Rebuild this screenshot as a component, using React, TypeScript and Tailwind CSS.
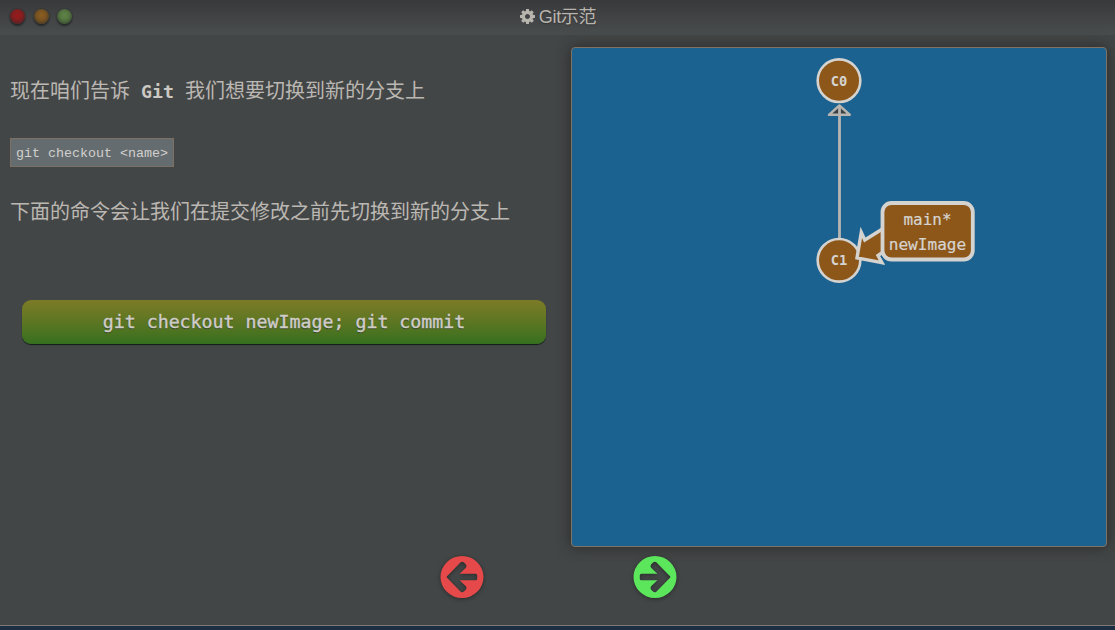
import React from "react";

function GearIcon() {
  return (
    <svg viewBox="0 128 1536 1536" className="h-[15px] w-[15px] fill-[#b8b4ae]">
      <path d="M1024 896q0-106-75-181t-181-75-181 75-75 181 75 181 181 75 181-75 75-181zm512-109v222q0 12-8 23t-20 13l-185 28q-19 54-39 91 35 50 107 138 10 12 10 25t-9 23q-27 37-99 108t-94 71q-12 0-26-9l-138-108q-44 23-91 38-16 136-29 186-7 28-36 28h-222q-14 0-24.5-8.5t-11.5-21.5l-28-184q-49-16-90-37l-141 107q-10 9-25 9-14 0-25-11-126-114-165-168-7-10-7-23 0-12 8-23 15-21 51-66.5t54-70.5q-27-50-41-99l-183-27q-13-2-21-12.5t-8-23.5v-222q0-12 8-23t19-13l186-28q14-46 39-92-40-57-107-138-10-12-10-24 0-10 9-23 26-36 98.5-107.5t94.5-71.5q13 0 26 10l138 107q44-23 91-38 16-136 29-186 7-28 36-28h222q14 0 24.5 8.5t11.5 21.5l28 184q49 16 90 37l142-107q9-9 24-9 13 0 25 10 129 119 165 170 7 8 7 22 0 12-8 23-15 21-51 66.5t-54 70.5q26 50 41 98l183 28q13 2 21 12.5t8 23.5z" />
    </svg>
  );
}

function WindowDots() {
  const base = "h-[15px] w-[15px] rounded-full shadow-[0_2px_2px_#25282a,0_0_2px_#2b2c2e]";
  return (
    <div className="flex flex-1 gap-[8.5px] pb-[2px] pl-[10px]">
      <span className={base + " bg-[radial-gradient(circle_at_50%_42%,#981b1c_0%,#8a1d1e_35%,#6b2022_60%,#352a2c_100%)]"} />
      <span className={base + " bg-[radial-gradient(circle_at_50%_42%,#8b5d20_0%,#7e5621_35%,#634822_60%,#33302c_100%)]"} />
      <span className={base + " bg-[radial-gradient(circle_at_50%_42%,#5e8446_0%,#577842_35%,#476038_60%,#2e3630_100%)]"} />
    </div>
  );
}

function CommitGraph() {
  return (
    <svg viewBox="572 48 534 498" className="block h-[498px] w-[534px] font-['DejaVu_Sans_Mono',monospace]">
      <path d="M839.4 105.5 L849.9 114.8 H828.9 Z" fill="#3b4245" stroke="#b8b5b1" strokeWidth="2.4" strokeLinejoin="round" />
      <path d="M839.5 107 V240" stroke="#b8b5b1" strokeWidth="2.8" />
      <g fill="#8d5719" stroke="#d5d3d0" strokeWidth="2.6">
        <circle cx="839" cy="80.7" r="21.3" />
        <circle cx="839" cy="260.3" r="21.3" />
      </g>
      <g fill="#d5d3d0" fontSize="13.5" fontWeight="bold" textAnchor="middle">
        <text x="839" y="86" textLength="16.6" lengthAdjust="spacingAndGlyphs">C0</text>
        <text x="839" y="265" textLength="16.6" lengthAdjust="spacingAndGlyphs">C1</text>
      </g>
      <path
        d="M884 228 L864.8 240 L861.3 232.5 L857 257.8 L882 262.7 L878 255.5 L886 250"
        fill="#8d5719"
        stroke="#d5d3d0"
        strokeWidth="3.4"
      />
      <rect x="882.5" y="203" width="90.3" height="56.5" rx="9" fill="#8d5719" stroke="#d5d3d0" strokeWidth="3.8" />
      <g fill="#d5d3d0" stroke="#d5d3d0" strokeWidth="0.2" fontSize="15" textAnchor="middle">
        <text x="927.5" y="225" textLength="48" lengthAdjust="spacingAndGlyphs">main*</text>
        <text x="927.5" y="250" textLength="77.5" lengthAdjust="spacingAndGlyphs">newImage</text>
      </g>
    </svg>
  );
}

function ArrowButton({ label, color, next }: { label: string; color: string; next?: boolean }) {
  return (
    <button aria-label={label} className="h-11 w-11">
      <svg
        viewBox="0 0 44 44"
        className={"h-11 w-11 overflow-visible drop-shadow-[0_1px_2px_#292b2b] " + color + (next ? " -scale-x-100" : "")}
      >
        <path
          fillRule="evenodd"
          fill="currentColor"
          d="M22 1 A21.5 21 0 1 1 22 43 A21.5 21 0 1 1 22 1 Z M7 21.2 L20.7 7.3 Q22.3 6 24 7.4 L26 9.4 Q27.1 11 25.9 12.7 L19.6 18.7 H35.5 Q37.2 18.7 37.2 20.3 V23.7 Q37.2 25.3 35.5 25.3 H19.6 L25.9 31.3 Q27.1 33 26 34.6 L24 36.6 Q22.3 38 20.7 36.7 L7 22.8 Q6.2 22 7 21.2 Z"
        />
      </svg>
    </button>
  );
}

export default function App() {
  return (
    <div className="flex h-[630px] w-[1115px] flex-col overflow-hidden bg-[#434646] text-[#bbb7b2]">
      <header className="flex h-[35px] shrink-0 items-center bg-linear-to-b from-[#39393b] to-[#494d4e]">
        <WindowDots />
        <h1 className="flex items-center gap-1 pb-px font-['Liberation_Sans','Noto_Sans_CJK_SC',sans-serif] text-[18px] leading-6 tracking-[-0.3px] text-[#b8b4ae]">
          <span className="pb-[2px]"><GearIcon /></span>
          <span className="[text-shadow:0_1px_1px_#333]">Git<span className="font-normal">示范</span></span>
        </h1>
        <div className="flex-1 pr-[9px]" />
      </header>

      <main className="flex h-[512px] shrink-0">
        <section className="flex w-[571px] shrink-0 flex-col items-start pl-[10px] pt-[41px] font-['DejaVu_Sans_Mono','Noto_Sans_CJK_SC',monospace]">
          <p className="whitespace-pre text-[20px] leading-[30px]">现在咱们告诉<span className="text-[18.25px] font-bold text-[#cbc8c4]"> Git </span>我们想要切换到新的分支上</p>
          <code className="mt-[31px] flex h-[29px] w-[164px] items-center border border-[#7d6f63] bg-[#656c70] pl-[5px] pt-[3px] font-['Liberation_Mono',monospace] text-[13.33px] text-[#d2d0cd]">
            git checkout &lt;name&gt;
          </code>
          <p className="mt-[30px] text-[20px] leading-[30px]">下面的命令会让我们在提交修改之前先切换到新的分支上</p>
          <button className="ml-3 mt-[73px] h-11 w-[524px] rounded-[9px] bg-linear-to-b from-[#7c7b26] to-[#35701f] pb-px text-[18.25px] text-[#d0cdc9] shadow-[0_1px_1px_#111b16] [-webkit-text-stroke:0.4px_#d0cdc9] [text-shadow:0_1px_1px_#343b28]">
            git checkout newImage; git commit
          </button>
        </section>
        <section className="mt-3 h-[500px] w-[536px] shrink-0 rounded-[4px] border border-[#807363] bg-[#1c6290] shadow-[0_0_14px_#292a2a]">
          <CommitGraph />
        </section>
      </main>

      <nav className="flex h-[78px] shrink-0 gap-[149px] pl-[440px] pt-2">
        <ArrowButton label="Previous" color="text-[#e64949]" />
        <ArrowButton label="Next" color="text-[#5ce65c]" next />
      </nav>
      <footer className="h-[5px] w-full shrink-0 border-t border-[#807974] bg-[#1c2f42]" />
    </div>
  );
}
